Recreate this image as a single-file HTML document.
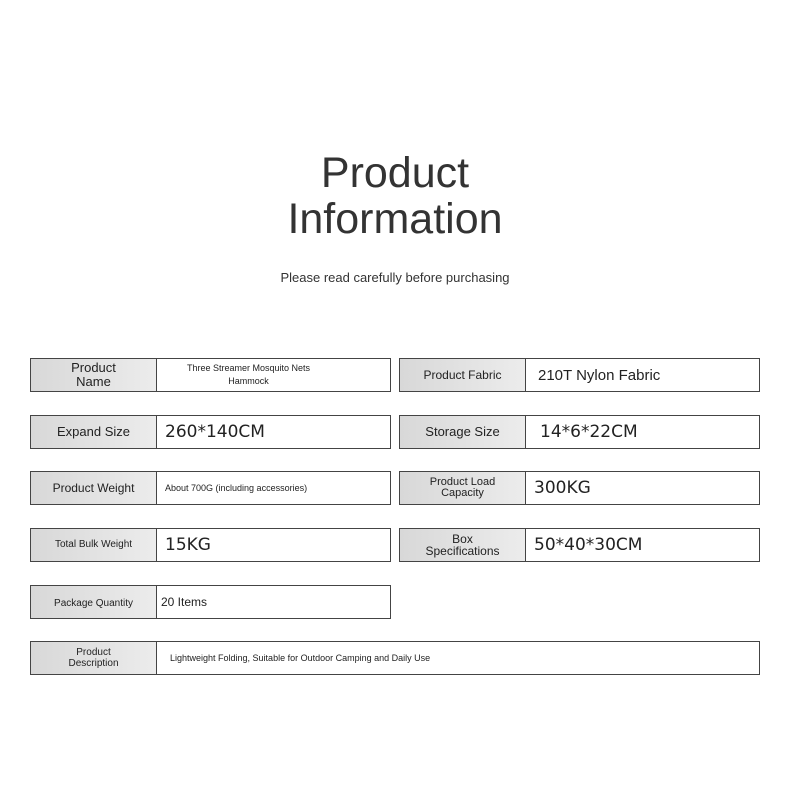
<!DOCTYPE html>
<html><head><meta charset="utf-8"><style>
body{margin:0;width:790px;height:790px;background:#fff;font-family:"Liberation Sans",sans-serif;position:relative;overflow:hidden;color:#222}
.t{position:absolute;left:0;width:790px;text-align:center;color:#333;font-size:43px;line-height:46px}
.s{position:absolute;left:0;width:790px;text-align:center;font-size:13px;color:#333;top:270px}
.b{position:absolute;height:32px;border:1px solid #444;display:flex;background:#fff}
.l{width:125px;border-right:1px solid #444;background:linear-gradient(90deg,#d8d8d8,#ececec);display:flex;align-items:center;justify-content:center;text-align:center;font-size:12px;line-height:12px;color:#222}
.v{flex:1;display:flex;align-items:center;padding-left:8px;font-size:11px}
.big{font-family:"DejaVu Sans",sans-serif;font-size:17px;padding-left:8px}
</style></head><body>
<div class="t" style="top:150px">Product</div>
<div class="t" style="top:196px">Information</div>
<div class="s">Please read carefully before purchasing</div>

<div class="b" style="left:30px;top:358px;width:359px"><div class="l" style="font-size:13px;line-height:14px">Product<br>Name</div><div class="v" style="font-size:9px;justify-content:center;text-align:center;padding-left:0;padding-right:50px;line-height:13px">Three Streamer Mosquito Nets<br>Hammock</div></div>
<div class="b" style="left:399px;top:358px;width:359px"><div class="l">Product Fabric</div><div class="v" style="font-size:15px;padding-left:12px">210T Nylon Fabric</div></div>

<div class="b" style="left:30px;top:415px;width:359px"><div class="l" style="font-size:13px">Expand Size</div><div class="v big">260*140CM</div></div>
<div class="b" style="left:399px;top:415px;width:359px"><div class="l" style="font-size:13px">Storage Size</div><div class="v big" style="padding-left:14px">14*6*22CM</div></div>

<div class="b" style="left:30px;top:471px;width:359px"><div class="l">Product Weight</div><div class="v" style="font-size:9px">About 700G (including accessories)</div></div>
<div class="b" style="left:399px;top:471px;width:359px"><div class="l" style="font-size:11px;line-height:11px">Product Load<br>Capacity</div><div class="v big">300KG</div></div>

<div class="b" style="left:30px;top:528px;width:359px"><div class="l" style="font-size:10px">Total Bulk Weight</div><div class="v big">15KG</div></div>
<div class="b" style="left:399px;top:528px;width:359px"><div class="l">Box<br>Specifications</div><div class="v big">50*40*30CM</div></div>

<div class="b" style="left:30px;top:585px;width:359px"><div class="l" style="font-size:10px;padding-top:4px">Package Quantity</div><div class="v" style="font-size:12px;padding-left:4px">20 Items</div></div>

<div class="b" style="left:30px;top:641px;width:728px"><div class="l" style="font-size:10px;line-height:11px">Product<br>Description</div><div class="v" style="font-size:9px;padding-left:13px">Lightweight Folding, Suitable for Outdoor Camping and Daily Use</div></div>
</body></html>
